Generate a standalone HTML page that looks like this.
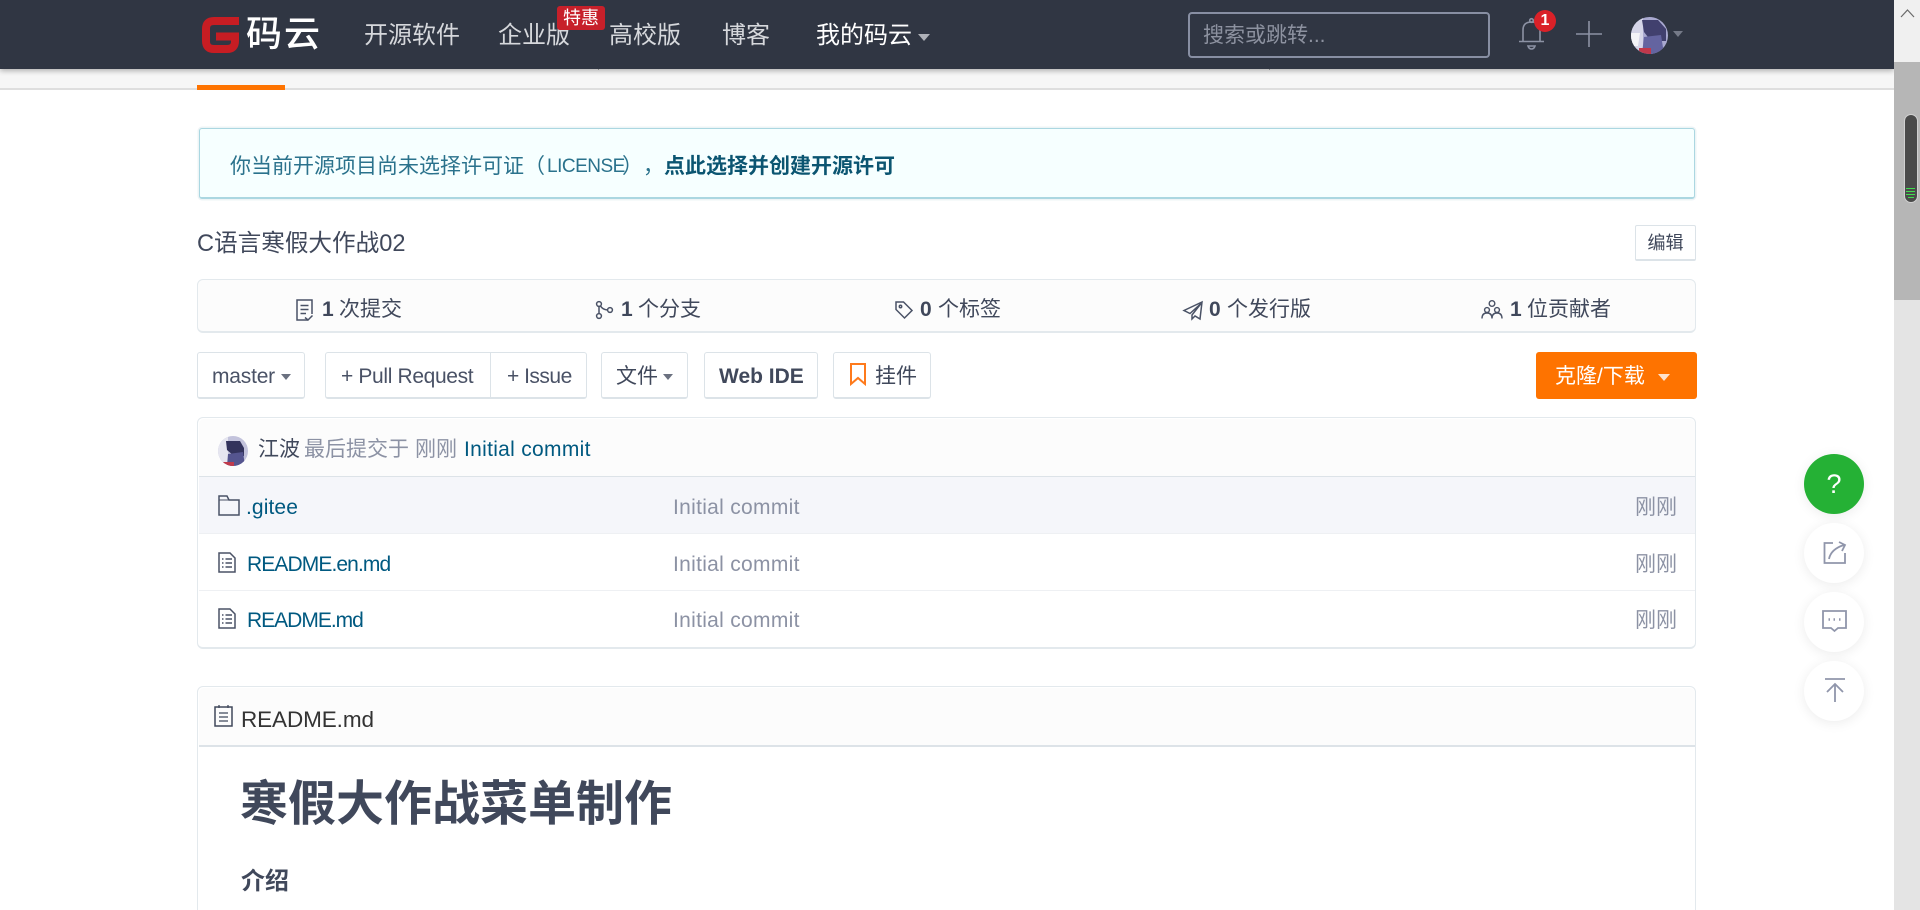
<!DOCTYPE html>
<html lang="zh-CN"><head><meta charset="utf-8"><title>C语言寒假大作战02</title>
<style>
html,body{margin:0;padding:0;width:1920px;height:910px;overflow:hidden;background:#fff}
body{position:relative;font-family:"Liberation Sans","Noto Sans CJK SC",sans-serif;font-size:21px;color:#40485b}
.a{position:absolute;box-sizing:border-box}
.t{position:absolute;white-space:nowrap;line-height:30px;height:30px}
.l{letter-spacing:.3px}
.nav{color:#d6d8dc;font-size:24px}
.btn{position:absolute;box-sizing:border-box;top:352px;height:47px;border:1.500px solid #dce3e8;border-bottom-width:2px;border-radius:3px;background:#fff}
.car{position:absolute;width:0;height:0;border-left:5.500px solid transparent;border-right:5.500px solid transparent;border-top:6px solid #6b7180}
.gr{color:#8c92a4}
.lk{color:#005980}
svg{position:absolute;overflow:visible}
.circ{position:absolute;left:1804px;width:60px;height:60px;border-radius:50%;background:#fff;box-shadow:0 2px 12px rgba(0,0,0,.08)}
</style></head><body>

<!-- sub nav strip -->
<div class="a" style="left:0;top:69px;width:1894px;height:19px;background:#f6f6f6"></div>
<div class="a" style="left:0;top:88px;width:1894px;height:2px;background:#dedede"></div>
<div class="a" style="left:197px;top:85px;width:88px;height:5px;background:#fe7300"></div>

<!-- header -->
<div class="a" style="left:0;top:0;width:1894px;height:69px;background:#303643;box-shadow:0 2px 5px rgba(0,0,0,.28)"></div>
<div class="a" style="left:598px;top:69px;width:1px;height:1px;background:#888"></div>
<div class="a" style="left:1269px;top:69px;width:1px;height:1px;background:#888"></div>
<svg style="left:202px;top:17px" width="37" height="36" viewBox="0 0 37 36"><path d="M37 4H12Q4 4 4 12V24Q4 32 12 32H25Q33 32 33 24V19.500H14" fill="none" stroke="#c71d23" stroke-width="8"/></svg>
<div class="t" style="left:246px;top:14px;height:40px;line-height:40px;font-size:36px;color:#fff;font-weight:500;letter-spacing:2px">码云</div>
<div class="t nav" style="left:364px;top:21px">开源软件</div>
<div class="t nav" style="left:498px;top:21px">企业版</div>
<div class="t nav" style="left:609px;top:21px">高校版</div>
<div class="t nav" style="left:722px;top:21px">博客</div>
<div class="t nav" style="left:816px;top:21px;color:#fff">我的码云</div>
<div class="car" style="left:918px;top:34px;border-left-width:6.500px;border-right-width:6.500px;border-top-width:7px;border-top-color:#aeb1b8"></div>
<div class="a" style="left:557px;top:6px;width:48px;height:24px;background:#c7202a;border-radius:3px;color:#fff;font-size:18px;line-height:24px;text-align:center">特惠</div>

<div class="a" style="left:1188px;top:12px;width:302px;height:46px;border:2px solid #888fa3;border-radius:4px"></div>
<div class="t" style="left:1203px;top:21px;color:#8d92a0">搜索或跳转...</div>

<svg style="left:1519px;top:18px" width="26" height="32" viewBox="0 0 26 32" fill="none" stroke="#8c92a4" stroke-width="1.600"><path d="M4 23V12Q4 4 12.500 4Q21 4 21 12V23"/><path d="M0 23.500H25"/><circle cx="12.500" cy="2.500" r="1.800"/><path d="M9 28H16Q15 31 12.500 31Q10 31 9 28Z"/></svg>
<div class="a" style="left:1534px;top:10px;width:22px;height:22px;border-radius:50%;background:#da2128;color:#fff;font-size:16px;font-weight:bold;line-height:22px;text-align:center">1</div>
<svg style="left:1576px;top:21px" width="26" height="26" viewBox="0 0 26 26" stroke="#8c92a4" stroke-width="1.600"><path d="M0 13H26M13 0V26"/></svg>
<svg style="left:1631px;top:17px" width="37" height="37" viewBox="0 0 37 37">
<defs><clipPath id="c1"><circle cx="18.500" cy="18.500" r="18.500"/></clipPath></defs>
<g clip-path="url(#c1)"><rect width="37" height="37" fill="#a9a9d0"/><rect x="0" y="0" width="12" height="37" fill="#d5d5e8"/><path d="M11 3H27L35 12V24H20L13 15Z" fill="#41406e"/><path d="M13 20L30 18L33 37H11Z" fill="#6464a0"/><path d="M0 16H9L7 29H0Z" fill="#f4f4f8"/><rect x="8" y="31" width="12" height="6" fill="#c0384b"/></g></svg>
<div class="car" style="left:1673px;top:31px;border-top-color:#757a88"></div>

<!-- scrollbar -->
<div class="a" style="left:1894px;top:0;width:26px;height:910px;background:#e4e4e4"></div>
<div class="a" style="left:1894px;top:0;width:26px;height:62px;background:#f0f0f0"></div>
<div class="a" style="left:1894px;top:62px;width:26px;height:238px;background:#b6b6b6"></div>
<svg style="left:1900px;top:9px" width="15" height="9" viewBox="0 0 15 9" fill="none" stroke="#6a6a6a" stroke-width="1.200"><path d="M1 8L7.500 1L14 8"/></svg>
<div class="a" style="left:1903.500px;top:114px;width:14.500px;height:89px;background:#4a4a4a;border:1.500px solid #d0d0d0;border-radius:7px"></div>
<div class="a" style="left:1906px;top:187.500px;width:9px;height:1px;background:#3fdc4f"></div>
<div class="a" style="left:1906px;top:190.500px;width:9px;height:1px;background:#3fdc4f"></div>
<div class="a" style="left:1906px;top:193.500px;width:9px;height:1px;background:#3fdc4f"></div>
<div class="a" style="left:1908px;top:196.500px;width:6px;height:1px;background:#3fdc4f"></div>

<!-- alert -->
<div class="a" style="left:199px;top:128px;width:1496px;height:71px;background:#f6ffff;border:1px solid #abd7e1;border-bottom-width:2px;border-radius:3px;box-shadow:0 0 0 1.500px #edf4f6"></div>
<div class="t" style="left:230px;top:152px;color:#2a728c">你当前开源项目尚未选择许可证（</div>
<div class="t" style="left:547px;top:152px;color:#2a728c;font-size:19px;letter-spacing:-.5px">LICENSE</div>
<div class="t" style="left:622px;top:152px;color:#2a728c">）</div>
<div class="t" style="left:643px;top:152px;color:#2a728c">，</div>
<div class="t" style="left:664px;top:152px;color:#0b5571;font-weight:bold">点此选择并创建开源许可</div>

<!-- title -->
<div class="t" style="left:197px;top:229px;font-size:23.600px;color:#40485b">C语言寒假大作战02</div>
<div class="a" style="left:1635px;top:225px;width:61px;height:36px;background:#fff;border:1.500px solid #dce3e8;border-bottom-width:2px;border-radius:2px;font-size:18px;line-height:35px;text-align:center">编辑</div>

<!-- stats -->
<div class="a" style="left:197px;top:279px;width:1499px;height:54px;background:#fcfcfc;border:1.500px solid #e3e9ed;border-bottom-width:2px;border-radius:6px"></div>
<svg style="left:296px;top:299px" width="17" height="22" viewBox="0 0 17 22" fill="none" stroke="#4a5266" stroke-width="1.500"><path d="M12 21H1V1H16V15"/><path d="M4.500 6.500H12.500M4.500 10.500H12.500M4.500 14.500H10"/><path d="M9 18.500L12 21L16.500 16.500"/></svg>
<div class="t" style="left:322px;top:295px"><b>1</b></div><div class="t" style="left:339px;top:295px">次提交</div>
<svg style="left:596px;top:301px" width="17" height="18" viewBox="0 0 17 18" fill="none" stroke="#4a5266" stroke-width="1.500"><circle cx="3" cy="3" r="2.400"/><circle cx="3" cy="15" r="2.400"/><circle cx="14" cy="9" r="2.400"/><path d="M3 5.500V12.500M4.500 5Q6.500 8.500 11.500 9"/></svg>
<div class="t" style="left:621px;top:295px"><b>1</b></div><div class="t" style="left:638px;top:295px">个分支</div>
<svg style="left:895px;top:301px" width="18" height="18" viewBox="0 0 18 18" fill="none" stroke="#4a5266" stroke-width="1.500"><path d="M1 1H8.500L17 9.500L9.500 17L1 8.500Z"/><circle cx="5.500" cy="5.500" r="1.200"/></svg>
<div class="t" style="left:920px;top:295px"><b>0</b></div><div class="t" style="left:938px;top:295px">个标签</div>
<svg style="left:1183px;top:301px" width="20" height="19" viewBox="0 0 20 19" fill="none" stroke="#4a5266" stroke-width="1.500"><path d="M19 1L1 9.500L7 12.500L18 2.500L9 14V18L12 15L17 18Z"/></svg>
<div class="t" style="left:1209px;top:295px"><b>0</b></div><div class="t" style="left:1227px;top:295px">个发行版</div>
<svg style="left:1481px;top:300px" width="22" height="19" viewBox="0 0 22 19" fill="none" stroke="#4a5266" stroke-width="1.400"><circle cx="11" cy="3.500" r="2.800"/><circle cx="6" cy="10" r="2.400"/><circle cx="16" cy="10" r="2.400"/><path d="M1 18.500Q1 13 6 13Q11 13 11 18.500M11 18.500Q11 13 16 13Q21 13 21 18.500"/></svg>
<div class="t" style="left:1510px;top:295px"><b>1</b></div><div class="t" style="left:1527px;top:295px">位贡献者</div>

<!-- buttons -->
<div class="btn" style="left:197px;width:108px"></div>
<div class="t" style="left:212px;top:362px;letter-spacing:-.2px;color:#4a5266">master</div>
<div class="car" style="left:281px;top:374px"></div>
<div class="btn" style="left:325px;width:262px"></div>
<div class="a" style="left:489.500px;top:352px;width:1.500px;height:46px;background:#dce3e8"></div>
<div class="t" style="left:341px;top:362px;color:#4a5266;letter-spacing:-.35px">+ Pull Request</div>
<div class="t" style="left:507px;top:362px;color:#4a5266;letter-spacing:-.5px">+ Issue</div>
<div class="btn" style="left:601px;width:87px"></div>
<div class="t" style="left:616px;top:362px">文件</div>
<div class="car" style="left:663px;top:374px"></div>
<div class="btn" style="left:704px;width:114px"></div>
<div class="t" style="left:719px;top:362px;font-weight:bold">Web IDE</div>
<div class="btn" style="left:833px;width:98px"></div>
<svg style="left:850px;top:363px" width="16" height="23" viewBox="0 0 16 23" fill="none" stroke="#fe7a1c" stroke-width="2"><path d="M1 1H15V21L8 15L1 21Z"/></svg>
<div class="t" style="left:875px;top:362px">挂件</div>
<div class="a" style="left:1536px;top:352px;width:161px;height:47px;background:#fe7300;border-radius:3px"></div>
<div class="t" style="left:1555px;top:362px;color:#fff">克隆/下载</div>
<div class="car" style="left:1658px;top:374px;border-left-width:6.500px;border-right-width:6.500px;border-top-width:7px;border-top-color:#ffe3cc"></div>

<!-- file list -->
<div class="a" style="left:197px;top:417px;width:1499px;height:232px;background:#fff;border:1.500px solid #e3e9ed;border-bottom-width:2px;border-radius:6px"></div>
<div class="a" style="left:198.500px;top:419px;width:1496px;height:57px;background:#fcfcfc;border-radius:5px 5px 0 0"></div>
<div class="a" style="left:198.500px;top:475.500px;width:1496px;height:1.500px;background:#dde3e8"></div>
<div class="a" style="left:198.500px;top:477px;width:1496px;height:56px;background:#f5f6fa"></div>
<div class="a" style="left:198.500px;top:533px;width:1496px;height:1px;background:#eef0f3"></div>
<div class="a" style="left:198.500px;top:590px;width:1496px;height:1px;background:#eef0f3"></div>

<svg style="left:218px;top:436px" width="30" height="30" viewBox="0 0 30 30"><defs><clipPath id="c2"><circle cx="15" cy="15" r="15"/></clipPath></defs><g clip-path="url(#c2)"><rect width="30" height="30" fill="#c3c3dc"/><rect width="10" height="30" fill="#e6e6f0"/><path d="M8 5H22L26 12V20H16L9 14Z" fill="#33335c"/><path d="M10 18L25 16L27 30H9Z" fill="#55558f"/><rect x="5" y="26" width="11" height="4" fill="#bf3a4c"/></g></svg>
<div class="t" style="left:258px;top:435px">江波</div>
<div class="t gr" style="left:304px;top:435px">最后提交于</div>
<div class="t gr" style="left:415px;top:435px">刚刚</div>
<div class="t lk l" style="left:464px;top:435px">Initial commit</div>

<svg style="left:218px;top:495px" width="22" height="21" viewBox="0 0 22 21" fill="none" stroke="#4a5266" stroke-width="1.500"><path d="M1 20V1H9L11 5H21V20Z"/><path d="M1 5H11" stroke-width="1"/></svg>
<div class="t lk" style="left:246px;top:493px;letter-spacing:.1px">.gitee</div>
<div class="t gr l" style="left:673px;top:493px">Initial commit</div>
<div class="t gr" style="left:1635px;top:493px">刚刚</div>

<svg style="left:218px;top:552px" width="18" height="21" viewBox="0 0 18 21" fill="none" stroke="#4a5266" stroke-width="1.500"><path d="M1 1H12L17 6V20H1Z"/><path d="M4 7H5.500M7.500 7H14M4 11H5.500M7.500 11H14M4 15H5.500M7.500 15H14"/></svg>
<div class="t lk" style="left:247px;top:550px;letter-spacing:-.9px">README.en.md</div>
<div class="t gr l" style="left:673px;top:550px">Initial commit</div>
<div class="t gr" style="left:1635px;top:550px">刚刚</div>

<svg style="left:218px;top:608px" width="18" height="21" viewBox="0 0 18 21" fill="none" stroke="#4a5266" stroke-width="1.500"><path d="M1 1H12L17 6V20H1Z"/><path d="M4 7H5.500M7.500 7H14M4 11H5.500M7.500 11H14M4 15H5.500M7.500 15H14"/></svg>
<div class="t lk" style="left:247px;top:606px;letter-spacing:-1px">README.md</div>
<div class="t gr l" style="left:673px;top:606px">Initial commit</div>
<div class="t gr" style="left:1635px;top:606px">刚刚</div>

<!-- readme -->
<div class="a" style="left:197px;top:686px;width:1499px;height:240px;background:#fff;border:1.500px solid #e3e9ed;border-radius:6px"></div>
<div class="a" style="left:198.500px;top:688px;width:1496px;height:57px;background:#fcfcfc;border-radius:5px 5px 0 0"></div>
<div class="a" style="left:198.500px;top:745px;width:1496px;height:1.500px;background:#dde3e8"></div>
<svg style="left:214px;top:705px" width="19" height="22" viewBox="0 0 19 22" fill="none" stroke="#40485b" stroke-width="1.500"><path d="M1 2H18V21H1Z"/><path d="M5 8H14M5 12H14M5 16H14M5 0V3M14 0V3" stroke-width="1.300"/></svg>
<div class="t" style="left:241px;top:705px;font-size:22.500px;color:#333;letter-spacing:-.1px">README.md</div>
<div class="t" style="left:240px;top:775px;font-size:48px;font-weight:bold;height:60px;line-height:60px">寒假大作战菜单制作</div>
<div class="t" style="left:241px;top:867px;font-size:24px;font-weight:bold">介绍</div>

<!-- side buttons -->
<div class="circ" style="top:454px;background:#25b135;color:#fff;font-size:27px;line-height:60px;text-align:center">?</div>
<div class="circ" style="top:523px"></div>
<svg style="left:1823px;top:541px" width="24" height="23" viewBox="0 0 24 23" fill="none" stroke="#9096ab" stroke-width="1.800"><path d="M10 2H1.500V22H22V12"/><path d="M6 18Q8 8 21 4M16 1L22 4L19 10"/></svg>
<div class="circ" style="top:592px"></div>
<svg style="left:1822px;top:610px" width="25" height="23" viewBox="0 0 25 23" fill="none" stroke="#9096ab" stroke-width="1.800"><path d="M1 1H24V18H16L12.500 21L9 18H1Z"/><path d="M6.500 9.500H8M11.500 9.500H13M17 9.500H18.500" stroke-width="2.400"/></svg>
<div class="circ" style="top:661px"></div>
<svg style="left:1824px;top:678px" width="22" height="24" viewBox="0 0 22 24" fill="none" stroke="#9096ab" stroke-width="1.800"><path d="M1 1H21M11 24V6M3 14L11 6L19 14"/></svg>

</body></html>
